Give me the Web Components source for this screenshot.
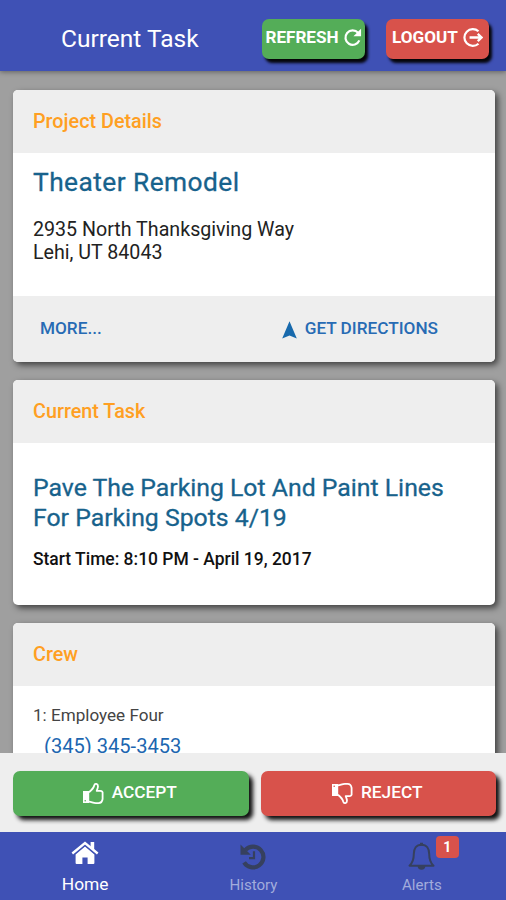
<!DOCTYPE html>
<html lang="en"><head><meta charset="utf-8"><title>Current Task</title>
<style>
html,body{margin:0;height:100%;overflow:hidden}
body{font-family:Roboto,"Liberation Sans",sans-serif;background:#9f9f9f}
</style></head><body>
<task-app></task-app>
<script>
const define=(name,html)=>customElements.define(name,class extends HTMLElement{
  constructor(){super();this.attachShadow({mode:'open'}).innerHTML=html;}
});
const icons={
refresh:['0 0 20 20','<path d="M15.9 5.600A7.600 7.600 0 1 0 17.200 13.500" fill="none" stroke="currentColor" stroke-width="2.300"/><path d="M19 1.300v8h-8z" fill="currentColor"/>'],
logout:['0 0 20 20','<path d="M15.700 4.100A8 8 0 1 0 15.700 15.900" fill="none" stroke="currentColor" stroke-width="2.100"/><path d="M7.200 10h10M15 6.600l3.600 3.400-3.600 3.400" fill="none" stroke="currentColor" stroke-width="2.200"/>'],
nav:['0 0 15 18','<path d="M7.5.3 14.8 17.6 7.5 14.6.2 17.6z" fill="currentColor"/>'],
up:['0 0 22 23','<path d="M1 9h6.2v12H1z" fill="currentColor"/><circle cx="3.2" cy="18.7" r=".8" fill="#54ad58"/><path d="M7 10.200c2.900-2.400 4.700-4.300 5.300-7 .5-2 3.700-1.600 3.700 1.100 0 1.600-.7 3-1.300 4.500h3.600c1.600 0 2.700 1.300 2.300 2.700v5.500c-.4 2.700-1.700 4.100-4.100 4.100h-2.600c-3 0-4.300-1.300-6.900-1.400" fill="none" stroke="currentColor" stroke-width="1.8" stroke-linejoin="round"/>'],
home:['0 0 28 24','<path d="M14 5.600 23.400 13.500V22q0 1-1 1H16.600v-6.500h-5.200V23H5.600q-1 0-1-1V13.500z" fill="currentColor"/><path d="M1.300 12.500 14 2l12.700 10.500" fill="none" stroke="#3f51b5" stroke-width="4.600"/><path d="M1.300 12.500 14 2l12.700 10.500" fill="none" stroke="currentColor" stroke-width="2.300"/><path d="M19.600 1h3.600v8.500l-3.600-3z" fill="currentColor"/>'],
history:['0 0 28 27','<path d="M6.400 6.900A10.400 10.400 0 1 1 5.100 19.300" fill="none" stroke="currentColor" stroke-width="4.200"/><path d="M1.500 1.500v10.300h10.300z" fill="currentColor"/><path d="M15 8.300v6.800h-5" fill="none" stroke="currentColor" stroke-width="2.200"/>'],
bell:['0 0 27 29','<path d="M13.500 2.700c-5.300 0-7.700 4.100-7.700 9.300 0 6-1.600 9.300-4.300 11.700h24c-2.700-2.400-4.300-5.700-4.300-11.700 0-5.200-2.400-9.300-7.700-9.300z" fill="none" stroke="currentColor" stroke-width="2" stroke-linejoin="round"/><path d="M12 .8h3v3h-3zM9.700 24h7.600a3.800 3.800 0 0 1-7.600 0z" fill="currentColor"/>']};
icons.down=['0 0 22 23',`<g transform="matrix(1 0 0 -1 0 23)">${icons.up[1].replace('#54ad58','#d8524b')}</g>`];
customElements.define('ui-icon',class extends HTMLElement{
  connectedCallback(){
    const [box,art]=icons[this.getAttribute('name')];
    this.attachShadow({mode:'open'}).innerHTML=`<style>:host{display:block;flex:none}svg{display:block;width:100%;height:100%}</style><svg viewBox="${box}" aria-hidden="true">${art}</svg>`;
  }
});
define('ui-button',`<style>:host{display:flex;align-items:center;justify-content:center;box-sizing:border-box;color:#fff;background:#54ad58;border-radius:7px;white-space:nowrap;font-weight:500;box-shadow:3px 4px 3px #050509}:host([danger]){background:#d8524b}</style><slot></slot>`);
define('task-header',`<style>
:host{display:flex;flex:none;align-items:flex-start;box-sizing:border-box;height:71px;padding:19px 17px 0 61px;background:#3f51b5;color:#fff;box-shadow:0 1px 5px #0006;position:relative;z-index:2}
h1{margin:4px auto 0 0;font-size:24.5px;line-height:31px;font-weight:400;white-space:nowrap}
ui-button{height:40px;width:103px;padding-bottom:4px;font-size:17.100px;font-weight:700;gap:4px}
ui-button+ui-button{margin-left:21px}
.refresh{width:19px;height:20px}.logout{width:21px;height:21px}
</style><h1>Current Task</h1><ui-button><span>REFRESH</span><ui-icon class="refresh" name="refresh"></ui-icon></ui-button><ui-button danger><span>LOGOUT</span><ui-icon class="logout" name="logout"></ui-icon></ui-button>`);
define('info-card',`<style>
:host{display:flex;flex:none;flex-direction:column;box-sizing:border-box;border-radius:5px;background:#fff;box-shadow:3px 3px 6px #0009}
header{box-sizing:border-box;height:63px;padding:20px 20px;background:#eee;border-radius:5px 5px 0 0;color:#ff9f22;font-size:19.8px;line-height:24px;font-weight:500}
section{padding:0 20px;flex:1}
</style><header><slot name="title"></slot></header><section><slot></slot></section><slot name="footer"></slot>`);
define('card-actions',`<style>:host{display:flex;align-items:center;box-sizing:border-box;height:66px;padding:0 57px 2px 27px;justify-content:space-between;background:#eee;border-radius:0 0 5px 5px;color:#276bb4;font-size:17.2px;font-weight:500}
div{display:flex;align-items:center;gap:8px}ui-icon{width:15px;height:18px;margin-top:3px;color:#1769ac}</style><span>MORE...</span><div><ui-icon name="nav"></ui-icon><span>GET DIRECTIONS</span></div>`);
define('task-footer',`<style>:host{display:flex;flex:none;box-sizing:border-box;height:79px;padding:18px 10px 0 13px;gap:12px;background:#eee;position:relative;z-index:1}
ui-button{flex:1;height:45px;font-size:17.300px;gap:8px;padding:0 3px 3px 0;box-shadow:4px 4px 4px #111}ui-icon{width:22px;height:23px;margin-top:2px}</style>
<ui-button><ui-icon name="up"></ui-icon><span>ACCEPT</span></ui-button><ui-button danger><ui-icon name="down"></ui-icon><span>REJECT</span></ui-button>`);
define('task-tabs',`<style>:host{display:grid;flex:none;grid-template-columns:repeat(3,1fr);box-sizing:border-box;height:68px;padding-left:1px;background:#3f51b5;color:#a2acdc;position:relative;z-index:1}
div{display:flex;flex-direction:column;align-items:center;position:relative}
ui-icon{color:#36405e}span{font-size:15.100px;line-height:20px;margin-top:auto;margin-bottom:5px}
.active{color:#fff}.active span{font-size:17.400px;margin-bottom:6px}.active ui-icon{color:#fff;width:28px;height:24px;margin-top:9px}
.history{width:28px;height:27px;margin-top:11px}.bell{width:27px;height:29px;margin-top:10px}
b{position:absolute;left:calc(50% + 14px);top:4px;width:23px;height:22px;border-radius:4px;background:#d8524b;color:#fff;font-size:14px;line-height:22px;text-align:center}
</style><div class="active"><ui-icon name="home"></ui-icon><span>Home</span></div><div><ui-icon class="history" name="history"></ui-icon><span>History</span></div><div><ui-icon class="bell" name="bell"></ui-icon><b>1</b><span>Alerts</span></div>`);
define('task-app',`<style>
:host{display:flex;flex-direction:column;width:506px;height:900px;overflow:hidden}
main{flex:1;min-height:0;overflow:hidden;display:flex;flex-direction:column;gap:18px;padding:19px 11px 0 13px;background:#9f9f9f}
h2,p{margin:0;white-space:nowrap}
h2{font-size:24.800px;line-height:29.500px;font-weight:400;color:#17628c;-webkit-text-stroke:.3px currentColor}
.project{height:272px}.project h2{padding-top:15px;font-size:26.300px;letter-spacing:.45px}.address{padding-top:20px;font-size:19.650px;line-height:23.500px;color:#222}
.task{height:225px}.task h2{padding-top:30px}.time{padding-top:16px;font-size:17.450px;line-height:22px;font-weight:500;color:#111}
.crew{height:220px}.name{padding-top:18px;font-size:17.100px;line-height:22px;color:#444}.phone{padding:8px 0 0 11px;font-size:20.100px;line-height:24px;color:#1c66b0}
</style>
<task-header></task-header><main>
<info-card class="project"><span slot="title">Project Details</span><h2>Theater Remodel</h2><p class="address">2935 North Thanksgiving Way<br>Lehi, UT 84043</p><card-actions slot="footer"></card-actions></info-card>
<info-card class="task"><span slot="title">Current Task</span><h2>Pave The Parking Lot And Paint Lines<br>For Parking Spots 4/19</h2><p class="time">Start Time: 8:10 PM - April 19, 2017</p></info-card>
<info-card class="crew"><span slot="title">Crew</span><p class="name">1: Employee Four</p><p class="phone">(345) 345-3453</p></info-card>
</main><task-footer></task-footer><task-tabs></task-tabs>`);
</script></body></html>
